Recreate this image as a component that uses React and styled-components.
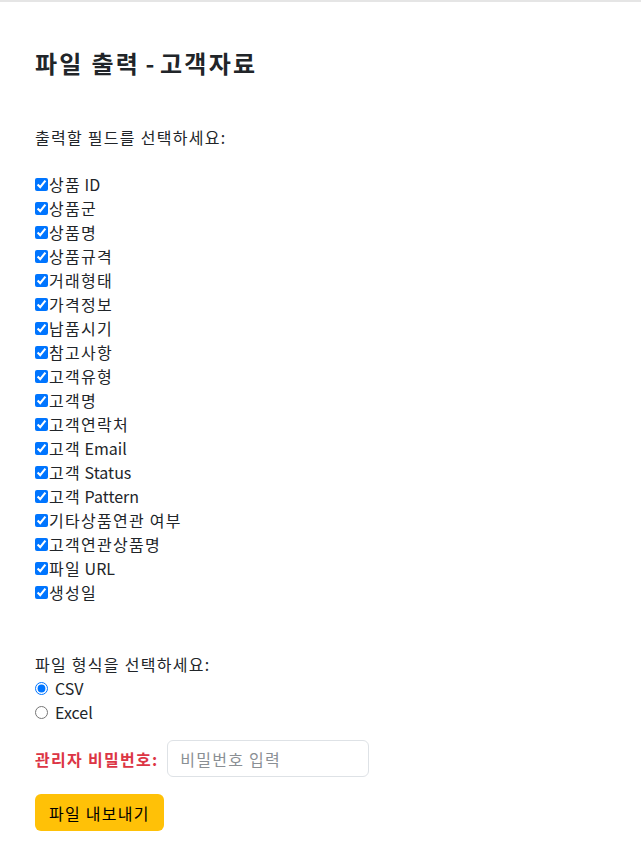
import React, { useState } from 'react'
import styled, { createGlobalStyle } from 'styled-components'

const GlobalStyle = createGlobalStyle`
  html, body {
    margin: 0;
    padding: 0;
    background: #fff;
  }
  body {
    font-family: "Noto Sans CJK KR", "Noto Sans", "Liberation Sans", sans-serif;
    color: #212529;
    font-size: 16px;
    line-height: 24px;
  }
`

// Hangul runs are set a little wider so they take the room of the original font
const Hangul = styled.span`
  letter-spacing: ${props => props.spacing || 0.08}em;
`

const Ko = ({ children, spacing }) =>
  String(children)
    .split(/([가-힣]+(?: [가-힣]+)*)/)
    .map((part, i) =>
      /[가-힣]/.test(part) ? <Hangul key={i} spacing={spacing}>{part}</Hangul> : part
    )

const Page = styled.div`
  border-top: 2px solid #e5e5e5;
  padding: 46px 35px 14px;
`

const Title = styled.h2`
  margin: 0 0 47px;
  font-size: 24px;
  font-weight: 700;
  line-height: 30px;
`

const Prompt = styled.p`
  margin: 0 0 ${props => props.gap || 0}px;
`

const FieldList = styled.div`
  display: flex;
  flex-direction: column;
  margin-bottom: 48px;
`

const Row = styled.label`
  display: flex;
  align-items: center;
  height: 24px;
  gap: ${props => props.gap || 0}px;
`

const Box = styled.input`
  width: 13px;
  height: 13px;
  margin: 0 1px 0 0;
`

const RadioGroup = styled.div`
  display: flex;
  flex-direction: column;
  margin-bottom: 16px;
`

const PasswordRow = styled.div`
  display: flex;
  align-items: center;
  gap: 10px;
  margin-bottom: 17px;
`

const RedLabel = styled.span`
  color: #dc3545;
  font-weight: 700;
`

const Input = styled.input`
  width: 202px;
  height: 37px;
  box-sizing: border-box;
  padding: 6px 12px;
  border: 1px solid #dee2e6;
  border-radius: 6px;
  font: inherit;
  letter-spacing: 0.08em;
  color: #212529;
  outline: none;
  &::placeholder {
    color: #8a8f94;
  }
`

const Button = styled.button`
  height: 37px;
  padding: 0 14px;
  border: none;
  border-radius: 6px;
  background: #ffc107;
  color: #000;
  font: inherit;
  cursor: pointer;
`

const fields = [
  '상품 ID', '상품군', '상품명', '상품규격', '거래형태', '가격정보', '납품시기',
  '참고사항', '고객유형', '고객명', '고객연락처', '고객 Email', '고객 Status',
  '고객 Pattern', '기타상품연관 여부', '고객연관상품명', '파일 URL', '생성일',
]

const App = () => {
  const [checked, setChecked] = useState(fields.map(() => true))
  const [format, setFormat] = useState('csv')

  return (
    <Page>
      <GlobalStyle />
      <Title><Ko spacing={0.095}>파일 출력 - 고객자료</Ko></Title>
      <Prompt gap={23}><Ko>출력할 필드를 선택하세요:</Ko></Prompt>
      <FieldList>
        {fields.map((f, i) => (
          <Row key={f}>
            <Box
              type='checkbox'
              checked={checked[i]}
              onChange={() => setChecked(checked.map((c, j) => (j === i ? !c : c)))}
            />
            <span><Ko>{f}</Ko></span>
          </Row>
        ))}
      </FieldList>
      <Prompt><Ko>파일 형식을 선택하세요:</Ko></Prompt>
      <RadioGroup>
        <Row gap={6}>
          <Box type='radio' name='fmt' checked={format === 'csv'} onChange={() => setFormat('csv')} />
          CSV
        </Row>
        <Row gap={6}>
          <Box type='radio' name='fmt' checked={format === 'excel'} onChange={() => setFormat('excel')} />
          Excel
        </Row>
      </RadioGroup>
      <PasswordRow>
        <RedLabel><Ko>관리자 비밀번호:</Ko></RedLabel>
        <Input type='password' placeholder='비밀번호 입력' />
      </PasswordRow>
      <Button><Ko>파일 내보내기</Ko></Button>
    </Page>
  )
}

export default App
